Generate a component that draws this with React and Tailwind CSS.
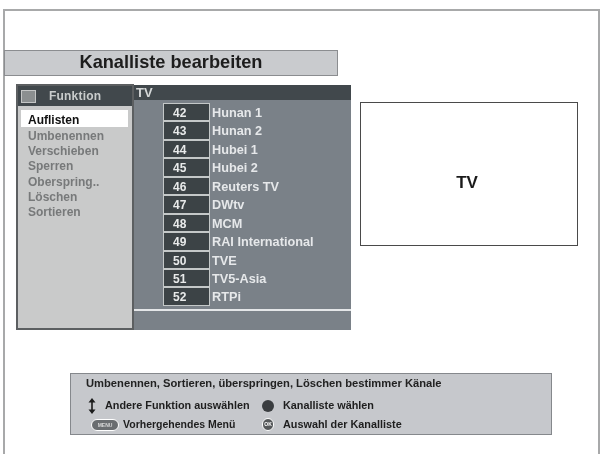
import React from 'react'

const FONT = 'font-["Liberation_Sans",Arial,sans-serif]'

const MENU = ['Umbenennen', 'Verschieben', 'Sperren', 'Oberspring..', 'Löschen', 'Sortieren']

const CHANNELS = [
  [42, 'Hunan 1'],
  [43, 'Hunan 2'],
  [44, 'Hubei 1'],
  [45, 'Hubei 2'],
  [46, 'Reuters TV'],
  [47, 'DWtv'],
  [48, 'MCM'],
  [49, 'RAI International'],
  [50, 'TVE'],
  [51, 'TV5-Asia'],
  [52, 'RTPi'],
]

function UpDown() {
  return (
    <svg width="8" height="16" viewBox="0 0 8 16" className="shrink-0">
      <path d="M4 0 L7.5 4.5 L0.5 4.5 Z M4 16 L7.5 11.5 L0.5 11.5 Z" fill="#1c1c1c" />
      <rect x="3.2" y="4" width="1.6" height="8" fill="#1c1c1c" />
    </svg>
  )
}

function FunctionPanel() {
  return (
    <div className="w-[118px] border-2 border-[#5c5f61] bg-[#c9caca] flex flex-col">
      <div className="h-[20px] bg-[#41484c] flex items-center pl-[3px] gap-[13px]">
        <div className="w-[15px] h-[13px] bg-[#8b8f90] border border-[#c4c6c6]" />
        <span className="text-[12px] tracking-[0.2px] font-bold text-[#c9cccc]">Funktion</span>
      </div>
      <div className="pt-[4px] pl-[3px] pr-[4px]">
        <div className="h-[17px] bg-white text-[12px] font-bold text-[#111] pl-[7px] leading-[20px]">Auflisten</div>
        <div className="pl-[7px] pt-[2px] flex flex-col">
          {MENU.map(m => (
            <div key={m} className="h-[15.2px] text-[12px] leading-[15.2px] font-bold text-[#77797a]">{m}</div>
          ))}
        </div>
      </div>
    </div>
  )
}

function ChannelList() {
  return (
    <div className="w-[217px] h-[245px] mt-[1px] bg-[#7a8188] flex flex-col">
      <div className="h-[15px] bg-[#41484c] text-[13px] leading-[15px] font-bold text-[#d5d8d8] pl-[2px]">TV</div>
      <div className="h-[211px] border-b-2 border-[#e4e6e8] pl-[29px] pt-[3px] flex flex-col">
        {CHANNELS.map(([n, name]) => (
          <div key={n} className="h-[18.45px] flex items-stretch">
            <div className="w-[47px] bg-[#3c4346] border border-[#c4c8c8] pl-[9px] text-[12px] leading-[19px] font-bold text-[#e8eaea]">{n}</div>
            <div className="pl-[2px] text-[12.7px] leading-[21px] font-bold text-[#e6e8ea]">{name}</div>
          </div>
        ))}
      </div>
    </div>
  )
}

function HelpBox() {
  return (
    <div className="ml-[65px] mt-[43px] w-[482px] h-[62px] bg-[#c6c8cc] border border-[#85888c] flex flex-col pl-[15px] pt-[2px] text-[10.85px] font-bold text-[#1e1e1e]">
      <div className="h-[19px] text-[11.2px] leading-[15px] text-[#222]">Umbenennen, Sortieren, überspringen, Löschen bestimmer Känale</div>
      <div className="flex items-center h-[21px]">
        <div className="w-[12px] flex justify-center"><UpDown /></div>
        <span className="w-[164px] pl-[7px]">Andere Funktion auswählen</span>
        <div className="w-[12px] h-[12px] rounded-full bg-[#3a3d40]" />
        <span className="pl-[9px]">Kanalliste wählen</span>
      </div>
      <div className="flex items-center h-[17px]">
        <div className="ml-[5px] w-[28px] h-[12px] rounded-full bg-[#6a6d70] border border-white text-[5px] leading-[10px] text-center text-[#d8d8d8]">MENU</div>
        <span className="w-[143px] pl-[4px] text-[10.5px]">Vorhergehendes Menü</span>
        <div className="w-[12px] h-[13px] rounded-full bg-[#55585a] border border-white text-[5px] leading-[11px] text-center text-white">OK</div>
        <span className="pl-[9px]">Auswahl der Kanalliste</span>
      </div>
    </div>
  )
}

export default function App() {
  return (
    <div className={`w-[601px] h-[454px] bg-white pl-[3px] pr-[1px] pt-[9px] overflow-hidden ${FONT}`}>
      <div className="h-[445px] border-l-2 border-t-2 border-r-2 border-[#a8a9aa] blur-[0.4px]">
        <div className="pt-[39px]">
          <div className="-ml-[1px] w-[334px] h-[26px] bg-[#c9cbce] border border-[#8b8d90] text-center text-[18.2px] leading-[23px] font-bold text-[#1d1d1d]">
            Kanalliste bearbeiten
          </div>
        </div>
        <div className="flex mt-[8px] ml-[11px] h-[246px]">
          <FunctionPanel />
          <ChannelList />
          <div className="ml-[9px] mt-[18px] w-[218px] h-[144px] border-[1.5px] border-[#4a4a4a] pt-[18px] pr-[4px] flex items-center justify-center text-[17px] font-bold text-[#1a1a1a]">
            TV
          </div>
        </div>
        <HelpBox />
      </div>
    </div>
  )
}
